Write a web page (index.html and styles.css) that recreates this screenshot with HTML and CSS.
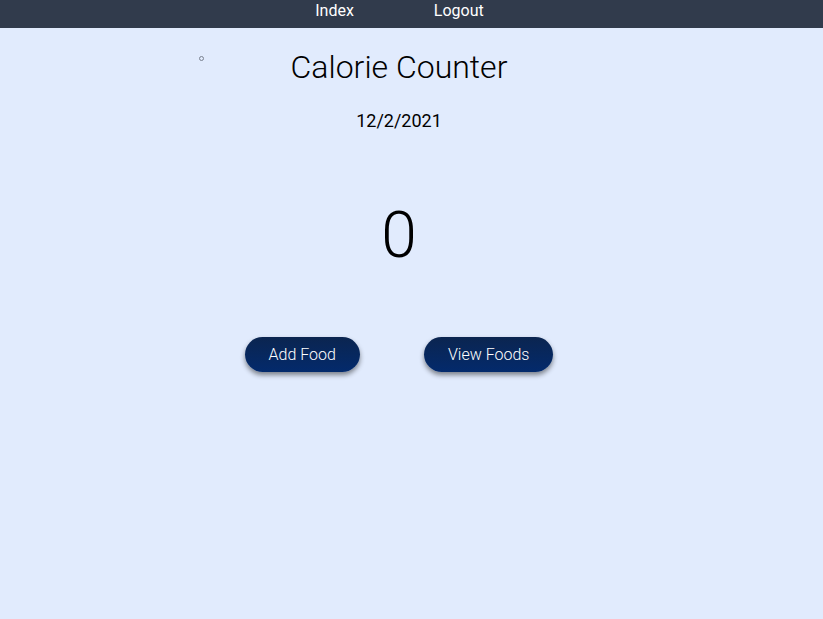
FILE: index.html
```html
<!DOCTYPE html>
<html>
<head>
<meta charset="utf-8">
<link rel="stylesheet" href="styles.css">
<title>Calorie Counter</title>
</head>
<body>
<nav class="nav">
  <a class="nav-link" href="#">Index</a>
  <a class="nav-link" href="#">Logout</a>
</nav>
<main class="main">
  <ul class="stray"><li></li></ul>
  <h1 class="title">Calorie Counter</h1>
  <p class="date">12/2/2021</p>
  <div class="count">0</div>
  <div class="actions">
    <button class="btn">Add Food</button>
    <button class="btn">View Foods</button>
  </div>
</main>
</body>
</html>
```
FILE: styles.css
```css
html, body {
  margin: 0;
  padding: 0;
  height: 100%;
}
body {
  background: #e1ebfd;
  font-family: Roboto, "Liberation Sans", sans-serif;
  color: #000;
}
.nav {
  height: 28px;
  background: #313b4c;
  display: flex;
  justify-content: center;
  align-items: center;
  gap: 80px;
  padding-right: 24px;
}
.nav-link {
  color: #fff;
  text-decoration: none;
  font-size: 16px;
  line-height: 20px;
  margin-top: -6px;
}
.main {
  position: relative;
  display: flex;
  flex-direction: column;
  align-items: center;
  padding-right: 25px;
}
.stray {
  position: absolute;
  left: 199px;
  top: 28px;
  margin: 0;
  padding: 0;
  list-style: none;
}
.stray li {
  width: 3px;
  height: 3px;
  border: 1px solid #7a8290;
  border-radius: 50%;
}
.title {
  margin: 19px 0 0;
  font-size: 32px;
  font-weight: 300;
  line-height: 40px;
}
.date {
  margin: 22px 0 0;
  font-size: 18px;
  line-height: 24px;
}
.count {
  margin-top: 65px;
  font-size: 64px;
  font-weight: 300;
  line-height: 76px;
}
.actions {
  margin-top: 63px;
  display: flex;
  gap: 64px;
}
.btn {
  height: 35px;
  padding: 0 24px;
  border: none;
  border-radius: 18px;
  background: linear-gradient(#0b2550, #032a6c);
  color: #fff;
  font-family: Roboto, "Liberation Sans", sans-serif;
  font-size: 16px;
  font-weight: 300;
  box-shadow: 0 3px 5px rgba(0, 0, 0, 0.45);
  cursor: pointer;
}
```
